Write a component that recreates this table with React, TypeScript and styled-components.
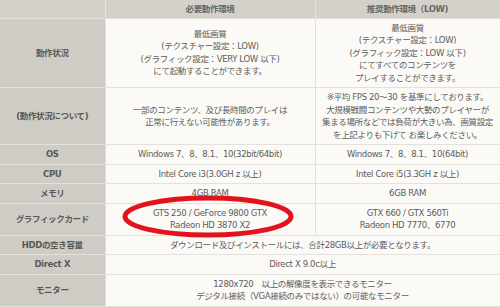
import React from "react";
import styled, { createGlobalStyle } from "styled-components";

const GlobalStyle = createGlobalStyle`
  html, body {
    margin: 0;
    padding: 0;
    background: #fbfaf6;
  }
`;

const SpecWrap = styled.div`
  position: relative;
  width: 500px;
  font-family: "DejaVu Sans", "Noto Sans CJK JP", sans-serif;
`;

const SpecTable = styled.table`
  width: 500px;
  table-layout: fixed;
  border-collapse: collapse;
  font-size: 8.5px;
  line-height: 12.5px;
  letter-spacing: -0.35px;
  color: #5c5c5c;
`;

const HeadCell = styled.th<{ $first?: boolean }>`
  background: #d4d1cb;
  border: 1px solid #e4e1dc;
  border-top: none;
  border-left: ${(p) => (p.$first ? "none" : "1px solid #e4e1dc")};
  padding: 3px 4px 2px;
  font-weight: 700;
  color: #666;
  text-align: center;
`;

const LabelCell = styled.th`
  background: #cfccc6;
  border: 1px solid #e4e1dc;
  border-left: none;
  padding: 3px 4px;
  font-weight: 700;
  color: #585858;
  text-align: center;
  vertical-align: middle;
`;

const Cell = styled.td`
  background: #fbfaf6;
  border: 1px solid #e4e1dc;
  padding: 3px 4px;
  text-align: center;
  vertical-align: middle;
  white-space: nowrap;
`;

const Marker = styled.svg`
  position: absolute;
  left: 120px;
  top: 193px;
  width: 176px;
  height: 47px;
  overflow: visible;
  pointer-events: none;
`;

type Line = string[];

const Lines = ({ lines }: { lines: Line }) => (
  <>
    {lines.map((l, i) => (
      <React.Fragment key={i}>
        {i > 0 && <br />}
        {l}
      </React.Fragment>
    ))}
  </>
);

type Row = {
  label: string;
  need: Line;
  low?: Line;
};

const rows: Row[] = [
  {
    label: "動作状況",
    need: [
      "最低画質",
      "(テクスチャー設定：LOW)",
      "(グラフィック設定：VERY LOW 以下)",
      "にて起動することができます。",
    ],
    low: [
      "最低画質",
      "(テクスチャー設定：LOW)",
      "(グラフィック設定：LOW 以下)",
      "にてすべてのコンテンツを",
      "プレイすることができます。",
    ],
  },
  {
    label: "(動作状況について)",
    need: ["一部のコンテンツ、及び長時間のプレイは", "正常に行えない可能性があります。"],
    low: [
      "※平均 FPS 20～30 を基準にしております。",
      "大規模戦闘コンテンツや大勢のプレイヤーが",
      "集まる場所などでは負荷が大きい為、画質設定",
      "を上記よりも下げて お楽しみください。",
    ],
  },
  {
    label: "OS",
    need: ["Windows 7、8、8.1、10(32bit/64bit)"],
    low: ["Windows 7、8、8.1、10(64bit)"],
  },
  {
    label: "CPU",
    need: ["Intel Core i3(3.0GH z 以上)"],
    low: ["Intel Core i5(3.3GH z 以上)"],
  },
  { label: "メモリ", need: ["4GB RAM"], low: ["6GB RAM"] },
  {
    label: "グラフィックカード",
    need: ["GTS 250 / GeForce 9800 GTX", "Radeon HD 3870 X2"],
    low: ["GTX 660 / GTX 560Ti", "Radeon HD 7770、6770"],
  },
  {
    label: "HDDの空き容量",
    need: ["ダウンロード及びインストールには、合計28GB以上が必要となります。"],
  },
  { label: "Direct X", need: ["Direct X 9.0c以上"] },
  {
    label: "モニター",
    need: [
      "1280x720　以上の解像度を表示できるモニター",
      "デジタル接続（VGA接続のみではない）の可能なモニター",
    ],
  },
];

export default function App() {
  return (
    <>
      <GlobalStyle />
      <SpecWrap>
        <SpecTable>
          <colgroup>
            <col style={{ width: 105 }} />
            <col style={{ width: 210 }} />
            <col style={{ width: 185 }} />
          </colgroup>
          <thead>
            <tr>
              <HeadCell $first></HeadCell>
              <HeadCell>必要動作環境</HeadCell>
              <HeadCell>推奨動作環境（LOW)</HeadCell>
            </tr>
          </thead>
          <tbody>
            {rows.map((r) => (
              <tr key={r.label}>
                <LabelCell>{r.label}</LabelCell>
                {r.low ? (
                  <>
                    <Cell>
                      <Lines lines={r.need} />
                    </Cell>
                    <Cell>
                      <Lines lines={r.low} />
                    </Cell>
                  </>
                ) : (
                  <Cell colSpan={2}>
                    <Lines lines={r.need} />
                  </Cell>
                )}
              </tr>
            ))}
          </tbody>
        </SpecTable>
        <Marker viewBox="0 0 176 47">
          <ellipse
            cx="88"
            cy="23.5"
            rx="83"
            ry="18.5"
            fill="none"
            stroke="#e2131c"
            strokeWidth="5"
          />
        </Marker>
      </SpecWrap>
    </>
  );
}
